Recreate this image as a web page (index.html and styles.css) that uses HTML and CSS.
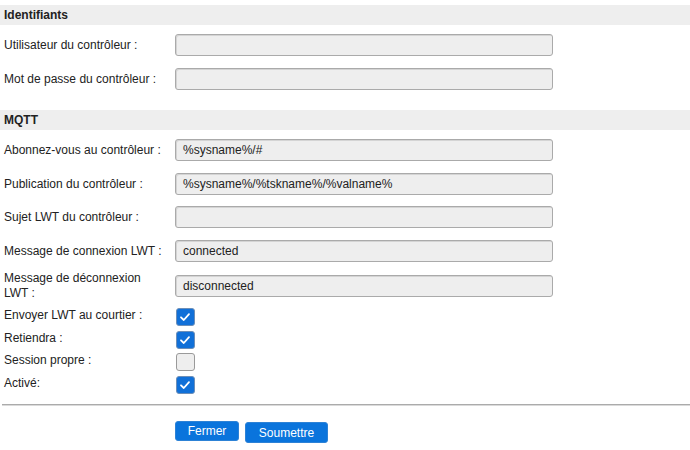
FILE: index.html
```html
<!DOCTYPE html>
<html lang="fr">
<head>
<meta charset="utf-8">
<title>Contrôleur</title>
<link rel="stylesheet" href="styles.css">
</head>
<body>
<div class="page">
  <div class="section-head">Identifiants</div>
  <div class="row r-first"><label class="lbl">Utilisateur du contrôleur :</label><div class="field"></div></div>
  <div class="row r12"><label class="lbl">Mot de passe du contrôleur :</label><div class="field"></div></div>

  <div class="section-head h-second">MQTT</div>
  <div class="row r-first"><label class="lbl">Abonnez-vous au contrôleur :</label><div class="field">%sysname%/#</div></div>
  <div class="row r12"><label class="lbl">Publication du contrôleur :</label><div class="field">%sysname%/%tskname%/%valname%</div></div>
  <div class="row r11"><label class="lbl">Sujet LWT du contrôleur :</label><div class="field"></div></div>
  <div class="row r12"><label class="lbl">Message de connexion LWT :</label><div class="field">connected</div></div>
  <div class="row r-two"><label class="lbl two">Message de déconnexion LWT :</label><div class="field">disconnected</div></div>

  <div class="row cbrow cb1"><label class="lbl">Envoyer LWT au courtier :</label><span class="cb on"><svg viewBox="0 0 18 18" width="18" height="18"><path d="M5 9.3 L7.8 12 L13 6.2" fill="none" stroke="#fff" stroke-width="1.8" stroke-linecap="round" stroke-linejoin="round"/></svg></span></div>
  <div class="row cbrow cb5"><label class="lbl">Retiendra :</label><span class="cb on"><svg viewBox="0 0 18 18" width="18" height="18"><path d="M5 9.3 L7.8 12 L13 6.2" fill="none" stroke="#fff" stroke-width="1.8" stroke-linecap="round" stroke-linejoin="round"/></svg></span></div>
  <div class="row cbrow cb4"><label class="lbl">Session propre :</label><span class="cb"></span></div>
  <div class="row cbrow cb5"><label class="lbl">Activé:</label><span class="cb on"><svg viewBox="0 0 18 18" width="18" height="18"><path d="M5 9.3 L7.8 12 L13 6.2" fill="none" stroke="#fff" stroke-width="1.8" stroke-linecap="round" stroke-linejoin="round"/></svg></span></div>

  <div class="divider"></div>

  <div class="buttons">
    <button class="btn btn-close">Fermer</button>
    <button class="btn btn-submit">Soumettre</button>
  </div>
</div>
</body>
</html>
```

FILE: styles.css
```css
html, body {
  margin: 0;
  padding: 0;
  background: #fff;
}
body {
  font-family: "Liberation Sans", Arial, sans-serif;
  font-size: 12px;
  color: #222;
}
.page {
  padding-top: 5px;
  width: 690px;
}
.section-head {
  height: 20px;
  line-height: 20px;
  background: #eeeeee;
  font-weight: bold;
  padding-left: 4px;
  color: #222;
}
.h-second { margin-top: 20px; }
.row {
  display: flex;
  align-items: center;
}
.r-first { margin-top: 9px; }
.r12 { margin-top: 12px; }
.r11 { margin-top: 11px; }
.r-two { margin-top: 9px; }
.lbl {
  width: 171px;
  padding-left: 4px;
  flex: none;
  line-height: 15px;
}
.lbl.two { width: 140px; margin-right: 31px; }
.field {
  box-sizing: border-box;
  width: 378px;
  height: 22px;
  line-height: 20px;
  border: 1px solid #aaaaaa;
  border-radius: 3px;
  background: #eeeeee;
  padding-left: 7px;
  color: #222;
  white-space: nowrap;
  box-shadow: inset 1px 1px 0 #d4d4d4;
}
.cbrow { height: 18px; }
.cbrow .lbl { position: relative; top: -2px; }
.cb1 { margin-top: 7px; }
.cb5 { margin-top: 5px; }
.cb4 { margin-top: 4px; }
.cb {
  box-sizing: border-box;
  display: block;
  width: 19px;
  height: 18px;
  margin-left: 1px;
  border: 1px solid #9a9a9a;
  border-radius: 3px;
  background: #eeeeee;
  overflow: hidden;
}
.cb.on {
  background: #1170d8;
  border-color: #6d8fb8;
}
.cb svg { display: block; margin: -1px 0 0 -1px; }
.divider {
  margin-top: 10px;
  margin-left: 2px;
  border-top: 1px solid #ababab;
  height: 1px;
  background: #dadada;
}
.buttons {
  display: flex;
  align-items: flex-start;
  margin-top: 15px;
  padding-left: 175px;
  gap: 6px;
}
.btn {
  font-family: "Liberation Sans", Arial, sans-serif;
  font-size: 12px;
  color: #fff;
  background: #0a74dc;
  border: 1px solid #2d82d6;
  border-radius: 3px;
  height: 20px;
  padding: 0;
  line-height: 18px;
  cursor: pointer;
}
.btn-close { width: 64px; padding-bottom: 2px; }
.btn-submit { width: 83px; height: 21px; margin-top: 1px; }
```
